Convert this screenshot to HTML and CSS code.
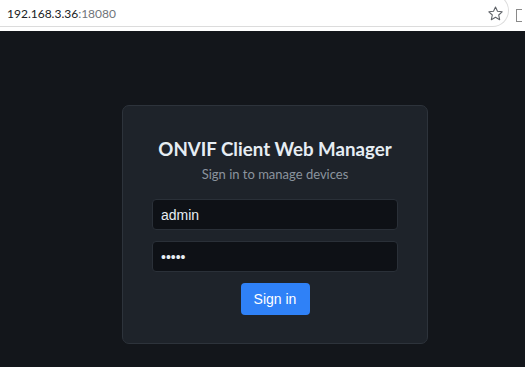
FILE: index.html
```html
<!DOCTYPE html>
<html lang="en">

<head>
  <meta charset="UTF-8">
  <meta name="viewport" content="width=device-width, initial-scale=1.0">
  <title>ONVIF Client Web Manager</title>
  <link rel="stylesheet" href="styles.css">
</head>

<body>
  <div class="urlbar">
    <div class="pill">
      <div class="url"><span class="host">192.168.3.36</span><span class="port">:18080</span></div>
      <svg class="star" width="17" height="17" viewBox="0 0 24 24">
        <path d="M12 2.8l2.8 6.1 6.6.7-4.9 4.5 1.4 6.6L12 17.4l-5.9 3.3 1.4-6.6-4.9-4.5 6.6-.7z" fill="none"
          stroke="#5f6368" stroke-width="1.5" stroke-linejoin="round" />
      </svg>
    </div>
    <div class="edge"></div>
  </div>

  <main class="page">
    <form class="card">
      <h1 class="title">ONVIF Client Web Manager</h1>
      <p class="subtitle">Sign in to manage devices</p>
      <input class="field" type="text" value="admin">
      <input class="field" type="password" value="admin">
      <button class="btn" type="button">Sign in</button>
    </form>
  </main>
</body>

</html>
```

FILE: styles.css
```css
body {
  margin: 0;
  padding: 0;
  height: 367px;
  overflow: hidden;
  background-color: #13161b;
  font-family: "Lato", "Open Sans", sans-serif;
}

.urlbar {
  height: 31px;
  background: #fff;
  display: flex;
  align-items: flex-start;
  overflow: hidden;
}

.pill {
  width: 509px;
  height: 33px;
  margin-top: -6px;
  box-sizing: border-box;
  border: 1px solid #dcdcdc;
  border-left: none;
  border-radius: 0 17px 17px 0;
  display: flex;
  align-items: center;
  padding: 6px 0 0 7px;
}

.url {
  flex: 1;
  font-family: "Lato", sans-serif;
  font-size: 12px;
  color: #202124;
}

.port {
  color: #70757a;
}

.star {
  margin-right: 4px;
}

.edge {
  width: 5px;
  height: 11px;
  margin: 9px 0 0 7px;
  border: 1px solid #8a8a8a;
  border-right: none;
}

.page {
  padding: 74px 0 0 122px;
}

.card {
  width: 306px;
  height: 239px;
  box-sizing: border-box;
  padding: 32px 29px 0;
  background-color: #1e232a;
  border: 1px solid #2d333b;
  border-radius: 7px;
  display: flex;
  flex-direction: column;
  align-items: center;
}

.title {
  margin: 0;
  font-size: 18.7px;
  font-weight: 700;
  color: #e6edf3;
  line-height: 22px;
}

.subtitle {
  margin: 4px 0 3px;
  font-size: 13px;
  color: #8b949e;
  line-height: 20px;
}

.field {
  width: 100%;
  height: 31px;
  box-sizing: border-box;
  margin-top: 11px;
  padding: 0 8px;
  background-color: #0e1116;
  border: 1px solid #2a3038;
  border-radius: 4px;
  color: #e6edf3;
  font-family: "Liberation Sans", sans-serif;
  font-size: 14px;
  outline: none;
}

.field:first-of-type {
  margin-top: 12px;
}

.btn {
  margin-top: 11px;
  width: 69px;
  height: 32px;
  border: none;
  border-radius: 4px;
  background-color: #2f81f7;
  color: #fff;
  font-family: "Liberation Sans", sans-serif;
  font-size: 14px;
}
```
